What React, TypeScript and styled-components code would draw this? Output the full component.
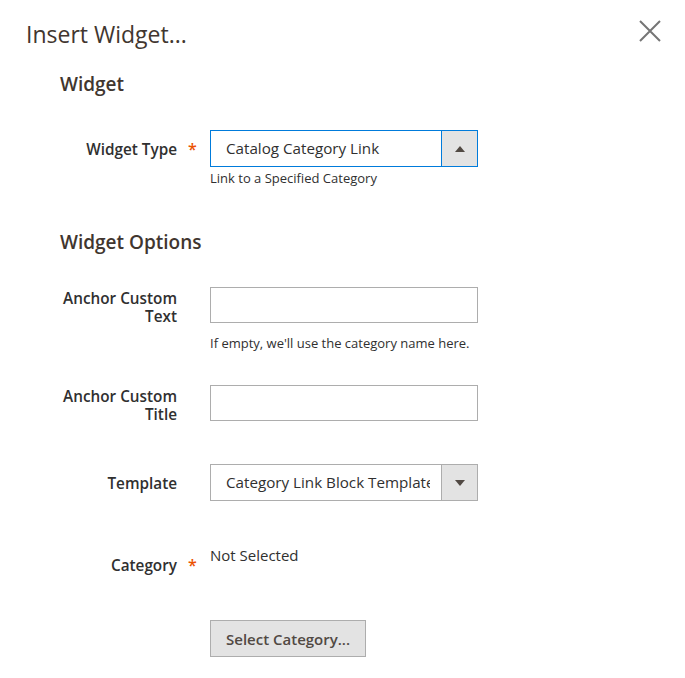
import styled, { createGlobalStyle } from "styled-components"

const Global = createGlobalStyle`
  body {
    margin: 0;
    background: #fff;
    font-family: "Open Sans", "Liberation Sans", sans-serif;
    color: #303030;
  }
`

const Modal = styled.div`
  width: 685px;
  height: 678px;
  position: relative;
  background: #fff;
`
const Header = styled.div`
  display: flex;
  justify-content: space-between;
  align-items: flex-start;
  padding: 18px 24px 0 26px;
`
const ModalTitle = styled.h1`
  margin: 0;
  font-size: 23px;
  font-weight: 400;
  line-height: 32px;
  color: #41362f;
`
const Close = styled.button`
  border: 0;
  background: none;
  padding: 0;
  margin-top: 2px;
  width: 22px;
  height: 22px;
  cursor: pointer;
`
const Form = styled.div`
  padding-left: 60px;
`
const Legend = styled.h2<{ $top: number }>`
  margin: ${p => p.$top}px 0 0;
  font-size: 19px;
  font-weight: 600;
  line-height: 26px;
  color: #41362f;
`
const Field = styled.div<{ $top: number }>`
  display: grid;
  grid-template-columns: 117px 33px 267px;
  margin-top: ${p => p.$top}px;
`
const Label = styled.label<{ $pad?: number }>`
  grid-column: 1;
  align-self: ${p => (p.$pad !== undefined ? "start" : "center")};
  padding-top: ${p => p.$pad ?? 0}px;
  margin-bottom: -${p => p.$pad ?? 0}px;
  text-align: right;
  font-size: 15.3px;
  font-weight: 600;
  line-height: 18px;
  color: #303030;
`
const Required = styled.span<{ $pad?: number }>`
  grid-column: 2;
  align-self: ${p => (p.$pad !== undefined ? "start" : "center")};
  padding-top: ${p => p.$pad ?? 0}px;
  padding-left: 11px;
  color: #eb5202;
  font-size: 16px;
  font-weight: 600;
  line-height: 18px;
`
const Control = styled.div`
  grid-column: 3;
`
const Input = styled.input`
  box-sizing: border-box;
  display: block;
  width: 268px;
  height: 36px;
  border: 1px solid #adadad;
  padding: 0 15px;
  font: 15px "Open Sans", sans-serif;
  outline: none;
`
const Select = styled.div<{ $focus?: boolean }>`
  box-sizing: border-box;
  display: flex;
  width: 268px;
  height: 37px;
  border: 1px solid ${p => (p.$focus ? "#007bdb" : "#adadad")};
  background: #fff;
`
const SelectText = styled.div`
  flex: 1;
  overflow: hidden;
  white-space: nowrap;
  margin: 0 11px 0 15px;
  font-size: 15.2px;
  line-height: 34px;
  color: #303030;
`
const SelectButton = styled.div<{ $focus?: boolean }>`
  width: 35px;
  flex: none;
  display: flex;
  align-items: center;
  justify-content: center;
  background: #e3e3e3;
  border-left: 1px solid ${p => (p.$focus ? "#007bdb" : "#adadad")};
`
const Arrow = styled.span<{ $up?: boolean }>`
  width: 0;
  height: 0;
  border-left: 5px solid transparent;
  border-right: 5px solid transparent;
  ${p => (p.$up ? "border-bottom: 6px solid #514943;" : "border-top: 6px solid #514943;")}
`
const Note = styled.div<{ $top: number }>`
  margin-top: ${p => p.$top}px;
  font-size: 13px;
  line-height: 16px;
  color: #303030;
`
const Value = styled.div`
  font-size: 15px;
  line-height: 18px;
  color: #303030;
`
const Button = styled.button`
  box-sizing: border-box;
  display: block;
  margin-top: 56px;
  height: 37px;
  padding: 0 15px;
  background: #e3e3e3;
  border: 1px solid #adadad;
  font: 600 15px "Open Sans", sans-serif;
  color: #514943;
  cursor: pointer;
`

const SelectBox = ({ value, focus, up }: { value: string; focus?: boolean; up?: boolean }) => (
  <Select $focus={focus}>
    <SelectText>{value}</SelectText>
    <SelectButton $focus={focus}>
      <Arrow $up={up} />
    </SelectButton>
  </Select>
)

const App = () => {
  return (
    <Modal>
      <Global />
      <Header>
        <ModalTitle>Insert Widget...</ModalTitle>
        <Close aria-label="Close">
          <svg width="22" height="22" viewBox="0 0 22 22">
            <path d="M1 1 L21 21 M21 1 L1 21" stroke="#757575" strokeWidth="2" fill="none" />
          </svg>
        </Close>
      </Header>
      <Form>
        <Legend $top={21}>Widget</Legend>
        <Field $top={33}>
          <Label>Widget Type</Label>
          <Required>*</Required>
          <Control>
            <SelectBox value="Catalog Category Link" focus up />
          </Control>
        </Field>
        <Field $top={0}>
          <Control>
            <Note $top={3}>Link to a Specified Category</Note>
          </Control>
        </Field>
        <Legend $top={43}>Widget Options</Legend>
        <Field $top={32}>
          <Label $pad={2}>Anchor Custom Text</Label>
          <Control>
            <Input />
          </Control>
        </Field>
        <Field $top={0}>
          <Control>
            <Note $top={12}>If empty, we'll use the category name here.</Note>
          </Control>
        </Field>
        <Field $top={34}>
          <Label $pad={2}>Anchor Custom Title</Label>
          <Control>
            <Input />
          </Control>
        </Field>
        <Field $top={43}>
          <Label>Template</Label>
          <Control>
            <SelectBox value="Category Link Block Template" />
          </Control>
        </Field>
        <Field $top={45}>
          <Label $pad={10}>Category</Label>
          <Required $pad={10}>*</Required>
          <Control>
            <Value>Not Selected</Value>
            <Button>Select Category...</Button>
          </Control>
        </Field>
      </Form>
    </Modal>
  )
}

export default App
